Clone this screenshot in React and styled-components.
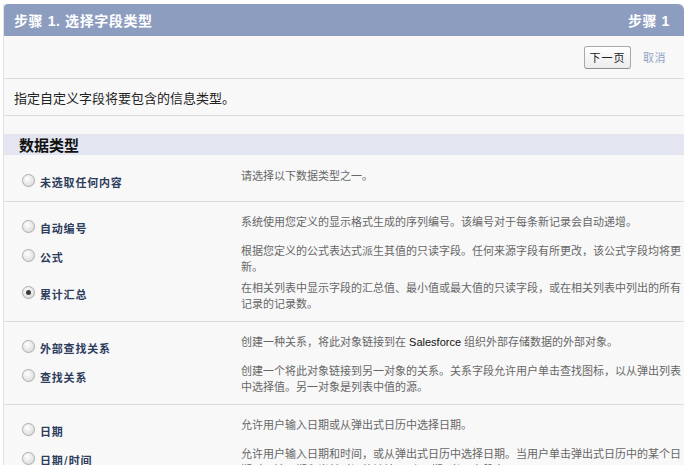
import styled, { createGlobalStyle } from 'styled-components';

const GlobalStyle = createGlobalStyle`
  html, body {
    margin: 0;
    padding: 0;
    background: #ffffff;
    overflow: hidden;
  }
  body {
    font-family: "Liberation Sans", "Noto Sans CJK SC", sans-serif;
  }
`;

const colors = {
  header: '#8d9dbf',
  panel: '#f8f8f8',
  band: '#e3e6f0',
  line: '#dcdcdc',
  label: '#2c3c5c',
  desc: '#676767',
  link: '#8fa5c5',
};

const Panel = styled.div`
  margin: 4px 0 0 3px;
  background: ${colors.panel};
  border-left: 1px solid #e2e2e2;
  min-height: 600px;
`;

const Header = styled.div`
  height: 32px;
  padding: 0 14px 0 10px;
  display: flex;
  align-items: center;
  justify-content: space-between;
  background: ${colors.header};
  border-radius: 4px 6px 0 0;
  color: #ffffff;
  font-size: 14px;
  font-weight: bold;
  letter-spacing: 0.6px;
`;

const ButtonBar = styled.div`
  height: 42px;
  padding-right: 18px;
  display: flex;
  align-items: center;
  justify-content: flex-end;
  gap: 12px;
  border-bottom: 1px solid ${colors.line};
`;

const Button = styled.button`
  width: 47px;
  height: 23px;
  padding: 0;
  border: 1px solid #a9a9a9;
  border-bottom-color: #8f8f8f;
  border-radius: 3px;
  background: linear-gradient(#ffffff, #ececec);
  color: #222;
  font-family: "Noto Sans CJK SC", sans-serif;
  font-size: 11px;
  letter-spacing: 1px;
  cursor: pointer;
`;

const Link = styled.a`
  color: ${colors.link};
  font-family: "Noto Sans CJK SC", sans-serif;
  font-size: 11px;
  letter-spacing: 0.5px;
  text-decoration: none;
`;

const Intro = styled.div`
  height: 36px;
  padding-left: 10px;
  display: flex;
  align-items: center;
  border-bottom: 1px solid ${colors.line};
  color: #222;
  font-size: 13px;
`;

const SectionTitle = styled.h3`
  margin: 18px 0 0;
  height: 21px;
  padding-left: 15px;
  display: flex;
  align-items: center;
  background: ${colors.band};
  color: #111;
  font-size: 15px;
  font-weight: bold;
`;

const Group = styled.div`
  padding: 12px 0 9px;
  display: flex;
  flex-direction: column;
  gap: 5px;
  border-bottom: 1px solid ${colors.line};
  margin-top: ${({ $first }) => ($first ? '1px' : '0')};
`;

const Row = styled.label`
  display: flex;
  align-items: flex-start;
  cursor: pointer;
`;

const LabelCell = styled.div`
  width: 219px;
  height: 20px;
  padding: 4px 0 0 18px;
  box-sizing: content-box;
  flex-shrink: 0;
  display: flex;
  align-items: center;
  gap: 5px;
`;

const Radio = styled.span`
  position: relative;
  width: 11px;
  height: 11px;
  margin-top: -3px;
  border-radius: 50%;
  border: 1px solid #b0b0b0;
  background: radial-gradient(circle at 40% 35%, #ffffff, #d2d2d2);
  box-shadow: 0 0 1px rgba(0, 0, 0, 0.15);

  &::after {
    content: '';
    display: ${({ $checked }) => ($checked ? 'block' : 'none')};
    position: absolute;
    top: 3px;
    left: 3px;
    width: 5px;
    height: 5px;
    border-radius: 50%;
    background: #3c3c3c;
  }
`;

const TypeName = styled.span`
  color: ${colors.label};
  font-family: "Noto Sans CJK SC", sans-serif;
  font-size: 11px;
  font-weight: bold;
  letter-spacing: 0.8px;
  line-height: 16px;
`;

const Desc = styled.div`
  width: 446px;
  color: ${colors.desc};
  font-size: 11px;
  line-height: 16px;

  b {
    color: #111;
    font-weight: normal;
  }
`;

const groups = [
  [{ name: '未选取任何内容', desc: '请选择以下数据类型之一。' }],
  [
    { name: '自动编号', desc: '系统使用您定义的显示格式生成的序列编号。该编号对于每条新记录会自动递增。' },
    { name: '公式', desc: '根据您定义的公式表达式派生其值的只读字段。任何来源字段有所更改，该公式字段均将更新。' },
    {
      name: '累计汇总',
      desc: '在相关列表中显示字段的汇总值、最小值或最大值的只读字段，或在相关列表中列出的所有记录的记录数。',
      checked: true,
    },
  ],
  [
    {
      name: '外部查找关系',
      desc: (
        <>
          创建一种关系，将此对象链接到在 <b>Salesforce</b> 组织外部存储数据的外部对象。
        </>
      ),
    },
    { name: '查找关系', desc: '创建一个将此对象链接到另一对象的关系。关系字段允许用户单击查找图标，以从弹出列表中选择值。另一对象是列表中值的源。' },
  ],
  [
    { name: '日期', desc: '允许用户输入日期或从弹出式日历中选择日期。' },
    {
      name: '日期/时间',
      desc: '允许用户输入日期和时间，或从弹出式日历中选择日期。当用户单击弹出式日历中的某个日期时，该日期和当前时间将被输入到“日期/时间”字段中。',
    },
  ],
];

export default function App() {
  return (
    <>
      <GlobalStyle />
      <Panel>
        <Header>
          <span>步骤 1. 选择字段类型</span>
          <span>步骤 1</span>
        </Header>
        <ButtonBar>
          <Button>下一页</Button>
          <Link href="#">取消</Link>
        </ButtonBar>
        <Intro>指定自定义字段将要包含的信息类型。</Intro>
        <SectionTitle>数据类型</SectionTitle>
        {groups.map((rows, i) => (
          <Group key={i} $first={i === 0}>
            {rows.map((row) => (
              <Row key={row.name}>
                <LabelCell>
                  <Radio $checked={row.checked} />
                  <TypeName>{row.name}</TypeName>
                </LabelCell>
                <Desc>{row.desc}</Desc>
              </Row>
            ))}
          </Group>
        ))}
      </Panel>
    </>
  );
}
